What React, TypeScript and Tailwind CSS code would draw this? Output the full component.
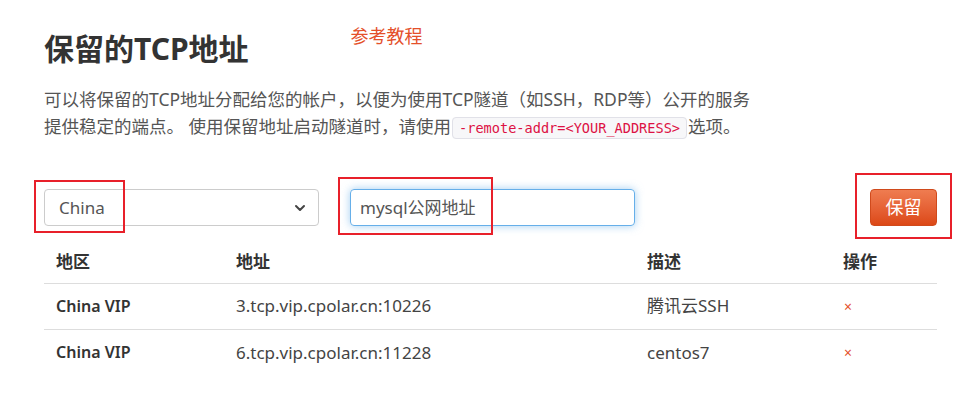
import React from 'react';

const rows = [
  { region: 'China VIP', addr: '3.tcp.vip.cpolar.cn:10226', desc: '腾讯云SSH' },
  { region: 'China VIP', addr: '6.tcp.vip.cpolar.cn:11228', desc: 'centos7' },
];

const font = { fontFamily: '"Noto Sans", "Noto Sans CJK SC", sans-serif' };

const App: React.FC = () => {
  return (
    <div className="min-h-screen bg-white text-[#333] pl-[44px] pt-[24px]" style={font}>
      <div className="w-[893px]">
        <div className="flex items-start">
          <h1 className="text-[30px] leading-[42px] font-bold text-[#333] mt-[4px]">保留的TCP地址</h1>
          <a className="ml-[102px] mt-[1px] text-[18px] leading-[22px] text-[#e4502a]">参考教程</a>
        </div>

        <p className="mt-[16px] text-[17.5px] leading-[27px] text-[#555]">
          可以将保留的TCP地址分配给您的帐户，以便为使用TCP隧道（如SSH，RDP等）公开的服务
          <br />
          提供稳定的端点。 使用保留地址启动隧道时，请使用
          <code
            className="mx-[1px] px-[6px] py-[2px] rounded-[4px] bg-[#f7f7f9] border border-[#e1e1e8] text-[#dd1144] text-[13.6px]"
            style={{ fontFamily: '"DejaVu Sans Mono", monospace' }}
          >
            -remote-addr=&lt;YOUR_ADDRESS&gt;
          </code>
          选项。
        </p>

        <div className="mt-[47px] flex items-center">
          <div className="relative">
            <div className="w-[275px] h-[37px] rounded-[4px] border border-[#ccc] flex items-center justify-between pl-[14px] pr-[12px] text-[17px] text-[#555]">
              <span>China</span>
              <svg width="12" height="12" viewBox="0 0 12 12" fill="none">
                <path d="M2 4l4 4 4-4" stroke="#444" strokeWidth="2" strokeLinecap="round" strokeLinejoin="round" />
              </svg>
            </div>
            <div className="absolute left-[-10px] top-[-9px] w-[91px] h-[53px] border-2 border-[#e8202a]" />
          </div>

          <div className="relative ml-[31px]">
            <div className="w-[285px] h-[37px] rounded-[4px] border border-[#66afe9] shadow-[0_0_8px_rgba(102,175,233,0.6)] flex items-center pl-[9px] text-[17px] text-[#555]">
              mysql公网地址
            </div>
            <div className="absolute left-[-12px] top-[-12px] w-[155px] h-[58px] border-2 border-[#e8202a]" />
          </div>

          <div className="relative ml-auto">
            <button className="w-[67px] h-[37px] rounded-[4px] bg-gradient-to-b from-[#ef7c50] to-[#dc4815] border border-[#d04a1c] text-white text-[18px]">
              保留
            </button>
            <div className="absolute left-[-15px] top-[-16px] w-[97px] h-[66px] border-2 border-[#e8202a]" />
          </div>
        </div>

        <table className="mt-[14px] w-[893px] table-fixed text-[17px] border-collapse">
          <colgroup>
            <col className="w-[180px]" />
            <col className="w-[411px]" />
            <col className="w-[196px]" />
            <col />
          </colgroup>
          <thead>
            <tr className="border-b border-[#ddd]">
              <th className="h-[43px] pl-[12px] text-left font-bold text-[#333]">地区</th>
              <th className="pl-[12px] text-left font-bold text-[#333]">地址</th>
              <th className="pl-[12px] text-left font-bold text-[#333]">描述</th>
              <th className="pl-[12px] text-left font-bold text-[#333]">操作</th>
            </tr>
          </thead>
          <tbody>
            {rows.map((r, i) => (
              <tr key={i} className={i === 0 ? 'border-b border-[#ddd]' : ''}>
                <td className="h-[46px] pl-[12px] font-semibold text-[16px] text-[#333]">{r.region}</td>
                <td className="pl-[12px] text-[#444]">{r.addr}</td>
                <td className="pl-[12px] text-[#444]">{r.desc}</td>
                <td className="pl-[13px] text-[#e4502a] text-[14px]">×</td>
              </tr>
            ))}
          </tbody>
        </table>
      </div>
    </div>
  );
};

export default App;
